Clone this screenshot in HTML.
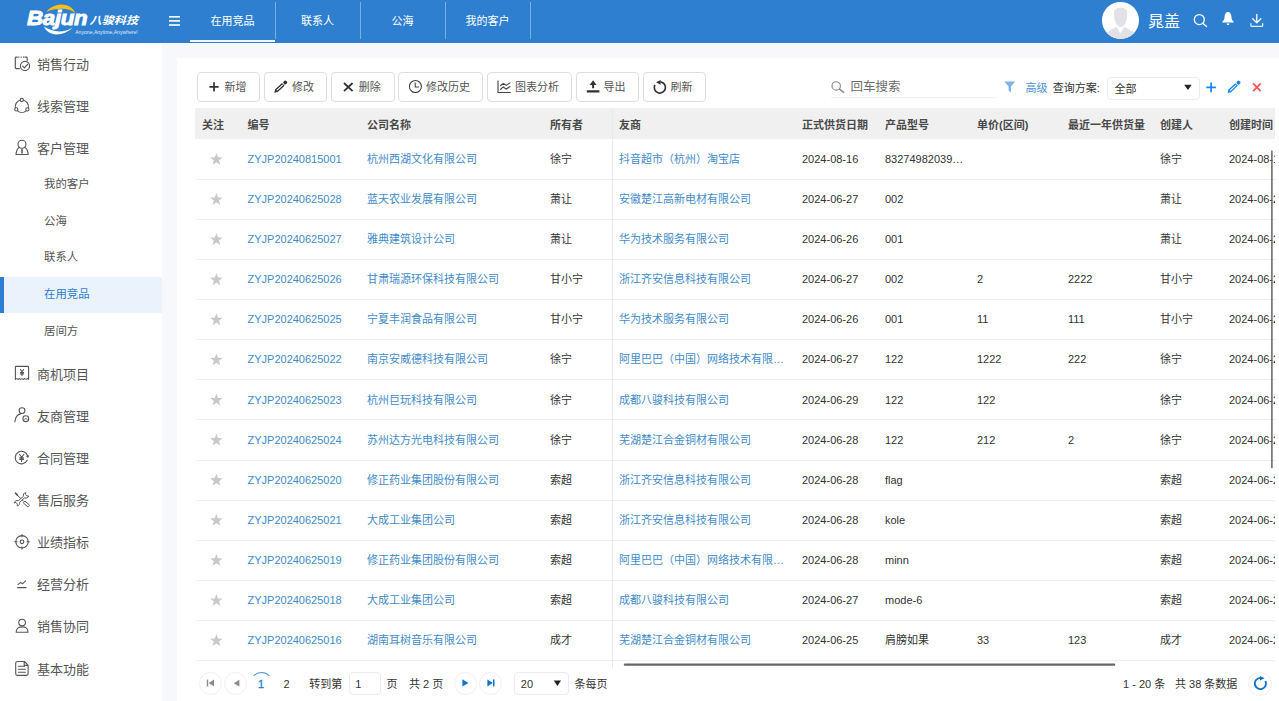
<!DOCTYPE html>
<html lang="zh-CN">
<head>
<meta charset="utf-8">
<title>在用竞品</title>
<style>
*{box-sizing:border-box;margin:0;padding:0}
html,body{width:1279px;height:701px;overflow:hidden;background:#f6f8fc;
  font-family:"Liberation Sans","Noto Sans CJK SC",sans-serif;font-size:11px;color:#333}
svg{position:absolute;left:0;top:0;overflow:visible}
/* header */
#hdr{position:absolute;left:0;top:0;width:1279px;height:43px;background:#2f7fd0;color:#fff}
.tab{position:absolute;top:0;height:42px;width:85px;text-align:center;line-height:42.4px;font-size:11px;color:#fff}
.tab.on{border-bottom:2px solid #f2f6fb}
.sep{position:absolute;top:2px;width:1px;height:37px;background:rgba(255,255,255,.36)}
#uname{position:absolute;left:1148px;top:9.8px;font-size:16px;line-height:24px;color:#fff}
#lg1{position:absolute;left:27.3px;top:4px;transform:scaleX(1.085);transform-origin:0 0;font-size:20.6px;line-height:28px;font-weight:bold;font-style:italic;letter-spacing:-0.3px;color:#fff;-webkit-text-stroke:0.9px #fff}
#lg2{position:absolute;left:89.5px;top:9.6px;font-size:12.2px;line-height:18px;font-weight:bold;font-style:italic;color:#fff;white-space:nowrap;transform:scaleY(.86);transform-origin:0 100%}
#lg3{position:absolute;left:75.2px;top:28.6px;font-size:5.1px;line-height:7px;color:#fff;white-space:nowrap;opacity:.85}
/* sidebar */
#side{position:absolute;left:0;top:43px;width:162px;height:658px;background:#fff}
.mi{position:absolute;left:37px;height:42px;font-size:13px;line-height:42px;color:#555;white-space:nowrap}
.si{position:absolute;left:0;width:162px;height:36.5px;font-size:11.4px;line-height:34.4px;color:#555;padding-left:44px;white-space:nowrap}
.si.on{background:#eaf2fb;color:#2e7dd1;border-left:4px solid #2e7dd1;padding-left:40px}
/* main */
#main{position:absolute;left:177px;top:58px;width:1102px;height:643px;background:#fff}
.btn{position:absolute;top:72px;height:29.5px;border:1px solid #dedede;border-radius:4px;background:#fff}
.bt{position:absolute;top:77px;line-height:20px;font-size:11px;color:#555;white-space:nowrap}
#tbl{position:absolute;left:195px;top:108px;width:1080px;height:560px;overflow:hidden}
#th{position:absolute;left:0;top:0;width:1080px;height:31px;background:#f0f0f0;font-weight:bold;color:#4a4a4a}
#th span{position:absolute;top:0;line-height:34px;white-space:nowrap}
.row{position:absolute;left:0;width:1080px;height:40px;line-height:40px;white-space:nowrap}
.ln{position:absolute;left:0;width:1080px;height:1px;background:#efefef}
.row span{position:absolute;top:0;white-space:nowrap}
.row .lk{color:#428bca}
.c0{left:7px}.c1{left:52.5px}.c2{left:172px}.c3{left:355px}.c4{left:424px}.c5{left:607px}.c6{left:690px}.c7{left:782px}.c8{left:873px}.c9{left:965px}.c10{left:1034px}
#vline{position:absolute;left:417px;top:0;width:1px;height:560px;background:#e9e9e9}
.t{position:absolute;white-space:nowrap;line-height:20px}
.box{position:absolute;border:1px solid #ebebeb;border-radius:4px;background:#fff}
.circ{position:absolute;width:23px;height:23px;border:1px solid #f0f0f0;border-radius:50%;background:#fff}
</style>
</head>
<body>

<div id="hdr">
  <svg width="1279" height="43" viewBox="0 0 1279 43">
    <!-- logo arcs -->
    <path d="M46.2 12 C50 7.4 55.8 4.6 61 4.6 C67.6 4.6 73.2 8 75.4 13.2 C72 10.4 67.6 8.9 62.6 8.8 C56.4 8.7 51 9.9 46.2 12Z" fill="#f9bd14"/>
    <path d="M43.9 26.6 C46 31.4 50.6 34.4 56.4 34.4 C62.8 34.4 69 31.4 72.8 27.2 C68.6 30.2 64 31.4 59.4 31.4 C53.6 31.4 48.4 29.8 43.9 26.6Z" fill="#fff"/>
    <!-- hamburger -->
    <g fill="#fff"><rect x="169" y="16" width="11" height="1.6"/><rect x="169" y="20.1" width="11" height="1.6"/><rect x="169" y="24.2" width="11" height="1.6"/></g>
    <!-- avatar -->
    <circle cx="1120.5" cy="20.4" r="18.5" fill="#fff"/>
    <clipPath id="avc"><circle cx="1120.5" cy="20.4" r="18.5"/></clipPath>
    <g clip-path="url(#avc)" fill="#e2e1e7">
      <path d="M1114 14 C1114 9 1116 7.7 1120.6 7.7 C1125.2 7.7 1127.2 9 1127.2 14 C1127.2 20 1125 27 1120.6 27 C1116.2 27 1114 20 1114 14 Z"/>
      <path d="M1105 40 L1105 34.5 C1106.5 31.5 1112 29.6 1116.5 26.4 L1120.5 33.4 L1124.4 26.4 C1129 29.6 1134.5 31.5 1136 34.5 L1136 40 Z"/>
    </g>
    <!-- search -->
    <g fill="none" stroke="#fff" stroke-width="1.3" stroke-linecap="round"><circle cx="1199.3" cy="19.6" r="5"/><path d="M1203 23.4 L1206.6 26.6"/></g>
    <!-- bell -->
    <path d="M1228 11.9 C1230.2 11.9 1231.2 14 1231.4 16.6 C1231.6 19.4 1232.2 20.6 1233.6 21.6 L1233.6 22.6 L1222.4 22.6 L1222.4 21.6 C1223.8 20.6 1224.4 19.4 1224.6 16.6 C1224.8 14 1225.8 11.9 1228 11.9Z M1226.6 23.4 L1229.4 23.4 C1229.4 24.4 1228.8 24.9 1228 24.9 C1227.2 24.9 1226.6 24.4 1226.6 23.4Z" fill="#fff"/>
    <!-- download -->
    <g fill="none" stroke="#fff" stroke-width="1.3" stroke-linecap="round" stroke-linejoin="round"><path d="M1256.8 14.4 L1256.8 22.6 M1252.7 18.8 L1256.8 22.9 L1260.9 18.8"/><path d="M1250.9 23.6 L1250.9 25.4 Q1250.9 26.3 1251.8 26.3 L1261.8 26.3 Q1262.7 26.3 1262.7 25.4 L1262.7 23.6" opacity=".85"/></g>
  </svg>
  <div id="lg1">Bajun</div><div id="lg2">八骏科技</div><div id="lg3">Anyone,Anytime,Anywhere!</div>
  <div class="tab on" style="left:190px">在用竞品</div>
  <div class="tab" style="left:275px">联系人</div>
  <div class="tab" style="left:360px">公海</div>
  <div class="tab" style="left:445px">我的客户</div>
  <div class="sep" style="left:275px"></div><div class="sep" style="left:360px"></div><div class="sep" style="left:444.5px"></div><div class="sep" style="left:529.5px"></div>
  <div id="uname">晁盖</div>
</div>

<div id="side"></div>
<div class="mi" style="top:44.0px">销售行动</div>
<div class="mi" style="top:86.1px">线索管理</div>
<div class="mi" style="top:128.2px">客户管理</div>
<div class="mi" style="top:353.6px">商机项目</div>
<div class="mi" style="top:395.7px">友商管理</div>
<div class="mi" style="top:437.9px">合同管理</div>
<div class="mi" style="top:480.0px">售后服务</div>
<div class="mi" style="top:522.1px">业绩指标</div>
<div class="mi" style="top:564.3px">经营分析</div>
<div class="mi" style="top:606.4px">销售协同</div>
<div class="mi" style="top:648.6px">基本功能</div>
<div class="si" style="top:166.7px">我的客户</div>
<div class="si" style="top:204.0px">公海</div>
<div class="si" style="top:240.2px">联系人</div>
<div class="si on" style="top:276.8px">在用竞品</div>
<div class="si" style="top:313.8px">居间方</div>

<svg width="162" height="701" viewBox="0 0 162 701" fill="none" stroke="#555" stroke-width="1.1" stroke-linecap="round" stroke-linejoin="round">
  <!-- 1 sales action -->
  <path d="M19.4 68.6 L16.2 68.6 Q15.3 68.6 15.3 67.7 L15.3 58 Q15.3 57.1 16.2 57.1 L17.3 57.1 M25 57.1 L26.3 57.1 Q27.2 57.1 27.2 58 L27.2 60.6" stroke-width="1.15"/>
  <path d="M18.9 56.5 V57.7 M21.2 56.5 V57.7 M23.6 56.5 V57.7" stroke-linecap="butt" stroke-width="1.1"/>
  <circle cx="25" cy="65.9" r="4.55" stroke-width="1.15"/>
  <path d="M22.7 66.2 L24.4 67.9 L27.6 64.3" stroke-width="1.2"/>
  <!-- 2 leads -->
  <path d="M23.6 100.3 A6.5 6.5 0 0 1 28.3 107.8 M26.2 110.9 A6.5 6.5 0 0 1 17.6 110.9 M15.4 107.8 A6.5 6.5 0 0 1 20 100.3"/>
  <circle cx="21.8" cy="100" r="1.6"/><circle cx="16.3" cy="109.4" r="1.6"/><circle cx="27.4" cy="109.4" r="1.6"/>
  <!-- 3 customer -->
  <circle cx="22" cy="144.3" r="4"/>
  <path d="M19.3 147.3 C17.5 148.5 16.3 151 16 154.5 L28.2 154.5 C27.9 151 26.7 148.5 24.7 147.3"/>
  <path d="M22 149.5 L22 153" stroke-width="1.5"/>
  <!-- 4 opportunity -->
  <path d="M15.4 379.4 L15.4 367.2 Q15.4 366.4 16.2 366.4 L27.8 366.4 Q28.6 366.4 28.6 367.2 L28.6 379.4 L27.3 378.6 L26 379.4 L24.7 378.6 L23.3 379.4 L22 378.6 L20.7 379.4 L19.4 378.6 L18 379.4 L16.7 378.6 Z"/>
  <path d="M20.5 369.6 L22 371.8 L23.5 369.6 M22 371.8 L22 375.6 M20.4 372.5 L23.6 372.5 M20.4 373.9 L23.6 373.9" stroke-width="1.1"/>
  <!-- 5 partner -->
  <circle cx="22" cy="410.6" r="2.9"/>
  <path d="M14.9 421.8 C15.2 417.6 17.6 414.4 21 413.6"/>
  <circle cx="25.8" cy="418.7" r="2.9"/>
  <path d="M24.5 419.2 Q25.8 417.4 27.1 419.2" stroke-width="0.9"/>
  <!-- 6 contract -->
  <path d="M27.2 460.3 A6.3 6.3 0 1 1 27.6 456"/>
  <path d="M26 456.2 L29.2 455.2 L28.2 458 Z" fill="#555" stroke="none"/>
  <path d="M19.6 454.5 L21.6 457.3 L23.7 454.5 M21.6 457.3 V461.4 M19.8 457.9 H23.5 M19.8 459.4 H23.5" stroke-width="1.1"/>
  <!-- 7 service -->
  <path d="M15.5 493.1 L17.4 495.1" stroke-width="1.6"/>
  <path d="M17 494.8 L23.4 501.2" stroke-width="1"/>
  <rect x="-3.2" y="-1.25" width="6.6" height="2.5" rx="0.9" transform="translate(26.4,504) rotate(40)" fill="#fff" stroke-width="0.9"/>
  <path transform="translate(17,503.2) rotate(-41)" fill="#fff" stroke-width="0.9" d="M-1.6 -2.2 A2.7 2.7 0 0 1 2.5 -1 L9.4 -1 A2.7 2.7 0 0 1 13.5 -2.2 L12.2 -0.9 L12.2 0.9 L13.5 2.2 A2.7 2.7 0 0 1 9.4 1 L2.5 1 A2.7 2.7 0 0 1 -1.6 2.2 L-0.3 0.9 L-0.3 -0.9 Z"/>
  <!-- 8 target -->
  <circle cx="22" cy="541.8" r="6.2"/><circle cx="22" cy="541.8" r="1.8"/>
  <path d="M22 534.5 L22 536.8 M22 546.8 L22 549.1 M14.7 541.8 L17 541.8 M27 541.8 L29.3 541.8"/>
  <!-- 9 analysis -->
  <path d="M18 584.6 L20.6 582.4 L22.4 583.8 L25.6 580.8 M17.6 587.6 L26 587.6"/>
  <!-- 10 collab -->
  <circle cx="22.1" cy="622.6" r="3.3"/>
  <path d="M16.2 632.2 C16 628.6 18.6 626.9 22.1 626.9 C25.6 626.9 28.2 628.6 28 632.2 Z"/>
  <!-- 11 basic -->
  <path d="M17.3 661.5 L24.4 661.5 L28.1 665.2 L28.1 673.8 A1.6 1.6 0 0 1 26.5 675.4 L17.3 675.4 A1.6 1.6 0 0 1 15.7 673.8 L15.7 663.1 A1.6 1.6 0 0 1 17.3 661.5 Z M24.2 661.8 L24.2 665.4 L27.8 665.4"/>
  <path d="M18.4 666.3 L24.4 666.3 M18.4 669.3 L25.4 669.3 M18.4 672.3 L25.4 672.3"/>
</svg>
<div id="main"></div>
<div id="tbl">
<div id="th"><span class="c0">关注</span><span class="c1">编号</span><span class="c2">公司名称</span><span class="c3">所有者</span><span class="c4">友商</span><span class="c5">正式供货日期</span><span class="c6">产品型号</span><span class="c7">单价(区间)</span><span class="c8">最近一年供货量</span><span class="c9">创建人</span><span class="c10">创建时间</span></div>
<div class="row" style="top:30.75px"><span class="c1 lk">ZYJP20240815001</span><span class="c2 lk">杭州西湖文化有限公司</span><span class="c3">徐宁</span><span class="c4 lk">抖音超市（杭州）淘宝店</span><span class="c5">2024-08-16</span><span class="c6">83274982039…</span><span class="c9">徐宁</span><span class="c10">2024-08-16 10:21</span></div>
<div class="ln" style="top:71px"></div>
<div class="row" style="top:70.88px"><span class="c1 lk">ZYJP20240625028</span><span class="c2 lk">蓝天农业发展有限公司</span><span class="c3">萧让</span><span class="c4 lk">安徽楚江高新电材有限公司</span><span class="c5">2024-06-27</span><span class="c6">002</span><span class="c9">萧让</span><span class="c10">2024-06-25 10:21</span></div>
<div class="ln" style="top:111px"></div>
<div class="row" style="top:111.01px"><span class="c1 lk">ZYJP20240625027</span><span class="c2 lk">雅典建筑设计公司</span><span class="c3">萧让</span><span class="c4 lk">华为技术服务有限公司</span><span class="c5">2024-06-26</span><span class="c6">001</span><span class="c9">萧让</span><span class="c10">2024-06-25 10:21</span></div>
<div class="ln" style="top:151px"></div>
<div class="row" style="top:151.14px"><span class="c1 lk">ZYJP20240625026</span><span class="c2 lk">甘肃瑞源环保科技有限公司</span><span class="c3">甘小宁</span><span class="c4 lk">浙江齐安信息科技有限公司</span><span class="c5">2024-06-27</span><span class="c6">002</span><span class="c7">2</span><span class="c8">2222</span><span class="c9">甘小宁</span><span class="c10">2024-06-25 10:21</span></div>
<div class="ln" style="top:191px"></div>
<div class="row" style="top:191.27px"><span class="c1 lk">ZYJP20240625025</span><span class="c2 lk">宁夏丰润食品有限公司</span><span class="c3">甘小宁</span><span class="c4 lk">华为技术服务有限公司</span><span class="c5">2024-06-26</span><span class="c6">001</span><span class="c7">11</span><span class="c8">111</span><span class="c9">甘小宁</span><span class="c10">2024-06-25 10:21</span></div>
<div class="ln" style="top:231px"></div>
<div class="row" style="top:231.40px"><span class="c1 lk">ZYJP20240625022</span><span class="c2 lk">南京安威德科技有限公司</span><span class="c3">徐宁</span><span class="c4 lk">阿里巴巴（中国）网络技术有限…</span><span class="c5">2024-06-27</span><span class="c6">122</span><span class="c7">1222</span><span class="c8">222</span><span class="c9">徐宁</span><span class="c10">2024-06-25 10:21</span></div>
<div class="ln" style="top:271px"></div>
<div class="row" style="top:271.53px"><span class="c1 lk">ZYJP20240625023</span><span class="c2 lk">杭州巨玩科技有限公司</span><span class="c3">徐宁</span><span class="c4 lk">成都八骏科技有限公司</span><span class="c5">2024-06-29</span><span class="c6">122</span><span class="c7">122</span><span class="c9">徐宁</span><span class="c10">2024-06-25 10:21</span></div>
<div class="ln" style="top:311px"></div>
<div class="row" style="top:311.66px"><span class="c1 lk">ZYJP20240625024</span><span class="c2 lk">苏州达方光电科技有限公司</span><span class="c3">徐宁</span><span class="c4 lk">芜湖楚江合金铜材有限公司</span><span class="c5">2024-06-28</span><span class="c6">122</span><span class="c7">212</span><span class="c8">2</span><span class="c9">徐宁</span><span class="c10">2024-06-25 10:21</span></div>
<div class="ln" style="top:352px"></div>
<div class="row" style="top:351.79px"><span class="c1 lk">ZYJP20240625020</span><span class="c2 lk">修正药业集团股份有限公司</span><span class="c3">索超</span><span class="c4 lk">浙江齐安信息科技有限公司</span><span class="c5">2024-06-28</span><span class="c6">flag</span><span class="c9">索超</span><span class="c10">2024-06-25 10:21</span></div>
<div class="ln" style="top:392px"></div>
<div class="row" style="top:391.92px"><span class="c1 lk">ZYJP20240625021</span><span class="c2 lk">大成工业集团公司</span><span class="c3">索超</span><span class="c4 lk">浙江齐安信息科技有限公司</span><span class="c5">2024-06-28</span><span class="c6">kole</span><span class="c9">索超</span><span class="c10">2024-06-25 10:21</span></div>
<div class="ln" style="top:432px"></div>
<div class="row" style="top:432.05px"><span class="c1 lk">ZYJP20240625019</span><span class="c2 lk">修正药业集团股份有限公司</span><span class="c3">索超</span><span class="c4 lk">阿里巴巴（中国）网络技术有限…</span><span class="c5">2024-06-28</span><span class="c6">minn</span><span class="c9">索超</span><span class="c10">2024-06-25 10:21</span></div>
<div class="ln" style="top:472px"></div>
<div class="row" style="top:472.18px"><span class="c1 lk">ZYJP20240625018</span><span class="c2 lk">大成工业集团公司</span><span class="c3">索超</span><span class="c4 lk">成都八骏科技有限公司</span><span class="c5">2024-06-27</span><span class="c6">mode-6</span><span class="c9">索超</span><span class="c10">2024-06-25 10:21</span></div>
<div class="ln" style="top:512px"></div>
<div class="row" style="top:512.31px"><span class="c1 lk">ZYJP20240625016</span><span class="c2 lk">湖南耳树音乐有限公司</span><span class="c3">成才</span><span class="c4 lk">芜湖楚江合金铜材有限公司</span><span class="c5">2024-06-25</span><span class="c6">肩膀如果</span><span class="c7">33</span><span class="c8">123</span><span class="c9">成才</span><span class="c10">2024-06-25 10:21</span></div>
<div class="ln" style="top:552px"></div>
<div id="vline"></div>
<svg width="1080" height="560"><polygon points="21.40,44.90 22.99,49.32 27.68,49.46 23.97,52.33 25.28,56.84 21.40,54.20 17.52,56.84 18.83,52.33 15.12,49.46 19.81,49.32" fill="#c9c9c9"/><polygon points="21.40,85.00 22.99,89.42 27.68,89.56 23.97,92.43 25.28,96.94 21.40,94.30 17.52,96.94 18.83,92.43 15.12,89.56 19.81,89.42" fill="#c9c9c9"/><polygon points="21.40,125.10 22.99,129.52 27.68,129.66 23.97,132.53 25.28,137.04 21.40,134.40 17.52,137.04 18.83,132.53 15.12,129.66 19.81,129.52" fill="#c9c9c9"/><polygon points="21.40,165.20 22.99,169.62 27.68,169.76 23.97,172.63 25.28,177.14 21.40,174.50 17.52,177.14 18.83,172.63 15.12,169.76 19.81,169.62" fill="#c9c9c9"/><polygon points="21.40,205.30 22.99,209.72 27.68,209.86 23.97,212.73 25.28,217.24 21.40,214.60 17.52,217.24 18.83,212.73 15.12,209.86 19.81,209.72" fill="#c9c9c9"/><polygon points="21.40,245.40 22.99,249.82 27.68,249.96 23.97,252.83 25.28,257.34 21.40,254.70 17.52,257.34 18.83,252.83 15.12,249.96 19.81,249.82" fill="#c9c9c9"/><polygon points="21.40,285.50 22.99,289.92 27.68,290.06 23.97,292.93 25.28,297.44 21.40,294.80 17.52,297.44 18.83,292.93 15.12,290.06 19.81,289.92" fill="#c9c9c9"/><polygon points="21.40,325.60 22.99,330.02 27.68,330.16 23.97,333.03 25.28,337.54 21.40,334.90 17.52,337.54 18.83,333.03 15.12,330.16 19.81,330.02" fill="#c9c9c9"/><polygon points="21.40,365.70 22.99,370.12 27.68,370.26 23.97,373.13 25.28,377.64 21.40,375.00 17.52,377.64 18.83,373.13 15.12,370.26 19.81,370.12" fill="#c9c9c9"/><polygon points="21.40,405.80 22.99,410.22 27.68,410.36 23.97,413.23 25.28,417.74 21.40,415.10 17.52,417.74 18.83,413.23 15.12,410.36 19.81,410.22" fill="#c9c9c9"/><polygon points="21.40,445.90 22.99,450.32 27.68,450.46 23.97,453.33 25.28,457.84 21.40,455.20 17.52,457.84 18.83,453.33 15.12,450.46 19.81,450.32" fill="#c9c9c9"/><polygon points="21.40,486.00 22.99,490.42 27.68,490.56 23.97,493.43 25.28,497.94 21.40,495.30 17.52,497.94 18.83,493.43 15.12,490.56 19.81,490.42" fill="#c9c9c9"/><polygon points="21.40,526.10 22.99,530.52 27.68,530.66 23.97,533.53 25.28,538.04 21.40,535.40 17.52,538.04 18.83,533.53 15.12,530.66 19.81,530.52" fill="#c9c9c9"/></svg>
</div>

<div class="circ" style="left:198.8px;top:672px"></div><div class="circ" style="left:224.4px;top:672px"></div>
<div style="position:absolute;left:249.8px;top:671.6px;width:23px;height:23px;border-radius:50%;border:1.2px solid transparent;border-top-color:#4a90d9"></div>
<div class="t" style="left:258px;top:674px;color:#1a7fd8;-webkit-text-stroke:0.3px #1a7fd8">1</div>
<div class="t" style="left:283.6px;top:674px;color:#333">2</div>
<div class="t" style="left:309.2px;top:674px">转到第</div>
<div class="box" style="left:348.6px;top:672.2px;width:32.2px;height:22.6px"></div>
<div class="t" style="left:355.2px;top:674px">1</div>
<div class="t" style="left:386.6px;top:674px">页</div>
<div class="t" style="left:409px;top:674px">共 2 页</div>
<div class="circ" style="left:453.8px;top:672px"></div><div class="circ" style="left:479.4px;top:672px"></div>
<div class="box" style="left:514.2px;top:672.2px;width:54.6px;height:22.8px"></div>
<div class="t" style="left:520.8px;top:674px">20</div>
<div class="t" style="left:574.4px;top:674px">条每页</div>
<div class="t" style="left:1123px;top:674px">1 - 20 条</div>
<div class="t" style="left:1175px;top:674px">共 38 条数据</div>
<div class="circ" style="left:1248.4px;top:672px;width:23.6px;height:23.6px"></div>

<div class="btn" style="left:196.6px;width:63.6px"></div><div class="btn" style="left:263.7px;width:63.5px"></div><div class="btn" style="left:331px;width:64px"></div><div class="btn" style="left:398.2px;width:85.3px"></div><div class="btn" style="left:487.2px;width:85px"></div><div class="btn" style="left:576.2px;width:63px"></div><div class="btn" style="left:642.8px;width:63.6px"></div>
<div class="bt" style="left:224.4px">新增</div><div class="bt" style="left:292px">修改</div><div class="bt" style="left:358.7px">删除</div>
<div class="bt" style="left:426px">修改历史</div><div class="bt" style="left:515px">图表分析</div><div class="bt" style="left:603.6px">导出</div><div class="bt" style="left:670.6px">刷新</div>
<div class="t" style="left:850.5px;top:77px;font-size:12.5px;color:#6c6c6c">回车搜索</div>
<div style="position:absolute;left:830.5px;top:97px;width:166px;height:1px;background:#f0f3f7"></div>
<div class="t" style="left:1025.5px;top:77.5px;color:#4a90d9">高级</div>
<div class="t" style="left:1052.8px;top:77.5px;color:#333">查询方案:</div>
<div class="box" style="left:1107.3px;top:77px;width:92.4px;height:22.6px"></div>
<div class="t" style="left:1114.4px;top:78.6px;color:#333">全部</div>
<svg width="1279" height="701" viewBox="0 0 1279 701">
  <!-- plus -->
  <path d="M214 82.2 V91.4 M209.4 86.8 H218.6" stroke="#333" stroke-width="1.7" fill="none"/>
  <!-- pencil -->
  <g transform="translate(274.3,92.7) rotate(-43)" fill="#333" stroke="none"><path d="M0 0 L2.9 -1.85 L2.9 1.85 Z"/><path d="M2.6 -1.85 H12.3 V1.85 H2.6 Z M3.4 -0.55 V0.55 H11.5 V-0.55 Z" fill-rule="evenodd"/><rect x="13.1" y="-1.85" width="3.7" height="3.7" rx="1.5"/></g>
  <!-- x -->
  <path d="M344 83 L352.6 91.2 M352.6 83 L344 91.2" stroke="#333" stroke-width="1.8" fill="none"/>
  <!-- clock -->
  <g fill="none" stroke="#444" stroke-width="1.1"><circle cx="415.4" cy="86.5" r="6"/><path d="M415.2 82.6 V87 H419"/></g>
  <!-- chart -->
  <g fill="none" stroke="#444" stroke-width="1.1"><path d="M498 80.4 V92.5 H510.8"/><path d="M500.2 86 L503.2 83.4 L506.2 85.4 L510.4 82.6 M500.2 89.6 L503.2 87 L506.2 89 L510.4 86.2"/></g>
  <!-- upload -->
  <path d="M593.1 80.2 L596.6 85 L594.1 85 L594.1 88.2 L592.1 88.2 L592.1 85 L589.6 85 Z M586.8 90.2 H599.4 V92.6 H586.8 Z" fill="#333"/>
  <!-- refresh -->
  <g fill="none" stroke="#333" stroke-width="1.7"><path d="M654.8 85 A5.6 5.6 0 1 0 660.6 81.85"/></g>
  <path d="M656 82.3 L660.6 79.9 L660.6 84.7 Z" fill="#333"/>
  <!-- search -->
  <g fill="none" stroke="#8a8a8a" stroke-linecap="round"><circle cx="836.2" cy="85.9" r="4.2" stroke-width="1.15"/><path d="M839.5 89.1 L843.7 92.4" stroke-width="1.5"/></g>
  <!-- filter -->
  <path d="M1004.4 81.6 H1015.2 L1011 86.6 V92.4 L1008.6 90.6 V86.6 Z" fill="#7fb3e6"/>
  <!-- select arrow -->
  <path d="M1184.2 84.8 H1191.6 L1187.9 90 Z" fill="#222"/>
  <!-- plus blue -->
  <path d="M1211.1 82.6 V92.2 M1206.3 87.4 H1215.9" stroke="#1684fc" stroke-width="1.7" fill="none"/>
  <!-- pencil blue -->
  <g transform="translate(1227.6,92.9) rotate(-43)" fill="#1684fc" stroke="none"><path d="M0 0 L2.9 -1.85 L2.9 1.85 Z"/><path d="M2.6 -1.85 H12.3 V1.85 H2.6 Z M3.4 -0.55 V0.55 H11.5 V-0.55 Z" fill-rule="evenodd"/><rect x="13.1" y="-1.85" width="3.7" height="3.7" rx="1.5"/></g>
  <!-- x red -->
  <path d="M1253.1 83.4 L1260.7 91.1 M1260.7 83.4 L1253.1 91.1" stroke="#fd5555" stroke-width="1.8" fill="none"/>
  <!-- vertical scrollbar -->
  <rect x="1271.2" y="150.6" width="1.4" height="317.6" fill="#5a5a5a"/>
  <!-- horizontal scrollbar -->
  <rect x="623.8" y="663.6" width="491.4" height="2.1" rx="1" fill="#666"/>
  <!-- pager icons -->
  <g fill="#8c8c8c"><rect x="206.8" y="679.6" width="1.4" height="7"/><path d="M214 679.6 V686.6 L208.6 683.1 Z"/><path d="M239.4 679.8 V686.6 L233.8 683.2 Z"/></g>
  <g fill="#1272cc"><path d="M462.4 679.2 V686.6 L468.4 682.9 Z"/><path d="M487.4 679.4 V686.4 L492.8 682.9 Z"/><rect x="493" y="679.4" width="1.5" height="7"/></g>
  <path d="M553.8 680.4 H561 L557.4 686 Z" fill="#222"/>
  <g fill="none" stroke="#0d72cf" stroke-width="1.9"><path d="M1265.4 681 A5.6 5.6 0 1 1 1260.2 677.9"/></g>
  <path d="M1264.6 678.2 L1260 675.9 L1260 680.6 Z" fill="#0d72cf"/>
</svg>

</body>
</html>
